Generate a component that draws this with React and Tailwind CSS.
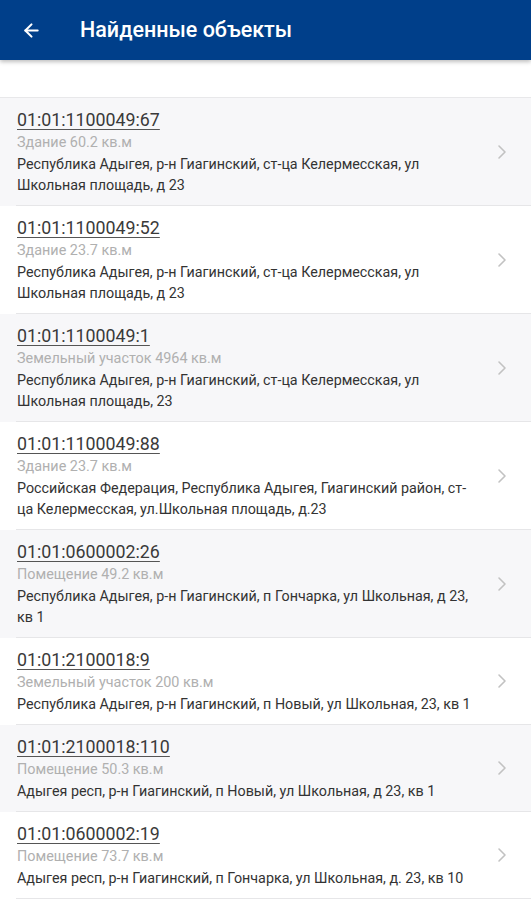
import { ArrowLeft } from 'lucide-react';

const items = [
  {
    id: '01:01:1100049:67',
    kind: 'Здание 60.2 кв.м',
    address: 'Республика Адыгея, р-н Гиагинский, ст-ца Келермесская, ул Школьная площадь, д 23',
  },
  {
    id: '01:01:1100049:52',
    kind: 'Здание 23.7 кв.м',
    address: 'Республика Адыгея, р-н Гиагинский, ст-ца Келермесская, ул Школьная площадь, д 23',
  },
  {
    id: '01:01:1100049:1',
    kind: 'Земельный участок 4964 кв.м',
    address: 'Республика Адыгея, р-н Гиагинский, ст-ца Келермесская, ул Школьная площадь, 23',
  },
  {
    id: '01:01:1100049:88',
    kind: 'Здание 23.7 кв.м',
    address: 'Российская Федерация, Республика Адыгея, Гиагинский район, ст-ца Келермесская, ул.Школьная площадь, д.23',
  },
  {
    id: '01:01:0600002:26',
    kind: 'Помещение 49.2 кв.м',
    address: 'Республика Адыгея, р-н Гиагинский, п Гончарка, ул Школьная, д 23, кв 1',
  },
  {
    id: '01:01:2100018:9',
    kind: 'Земельный участок 200 кв.м',
    address: 'Республика Адыгея, р-н Гиагинский, п Новый, ул Школьная, 23, кв 1',
  },
  {
    id: '01:01:2100018:110',
    kind: 'Помещение 50.3 кв.м',
    address: 'Адыгея респ, р-н Гиагинский, п Новый, ул Школьная, д 23, кв 1',
  },
  {
    id: '01:01:0600002:19',
    kind: 'Помещение 73.7 кв.м',
    address: 'Адыгея респ, р-н Гиагинский, п Гончарка, ул Школьная, д. 23, кв 10',
  },
];

const Chevron = () => (
  <svg width="10" height="16" viewBox="0 0 10 16" fill="none" className="shrink-0">
    <polyline points="2,2 8,8 2,14" stroke="#c2c2c2" strokeWidth="1.6" strokeLinecap="round" strokeLinejoin="round" />
  </svg>
);

const Row = ({ item, shaded }) => (
  <div className={shaded ? 'bg-[#f7f7f9]' : 'bg-white'}>
    <div className="flex items-center">
      <div className="flex-1 min-w-0 pl-[17px] pt-[10px] pb-[9px]">
        <p className="text-[17.8px] leading-[24px] text-[#3a3a3a] underline underline-offset-[3px] decoration-[1px] decoration-[#555]">
          {item.id}
        </p>
        <p className="text-[14.4px] leading-[22px] text-[#b0b0b0]">{item.kind}</p>
        <p className="text-[14.3px] leading-[21px] text-[#333] pr-[15px]">{item.address}</p>
      </div>
      <div className="w-[34px] flex items-center">
        <Chevron />
      </div>
    </div>
    <div className="ml-[16px] h-[1px] bg-[#e6e6e8]" />
  </div>
);

export default function App() {
  return (
    <div className="w-[531px] min-h-[900px] bg-white font-['Roboto','Noto_Sans',sans-serif]">
      <header className="h-[60px] bg-[#003f8a] flex items-center shadow-[0_2px_4px_rgba(0,0,0,0.25)] relative z-10">
        <div className="w-[80px] pl-[21px] flex items-center">
          <ArrowLeft className="w-[21px] h-[21px] text-white" strokeWidth={2.4} />
        </div>
        <h1 className="text-white text-[21.5px] font-medium">Найденные объекты</h1>
      </header>
      <div className="h-[37px] bg-white" />
      <div className="border-t border-[#e8e8ea]">
        {items.map((item, i) => (
          <Row key={item.id} item={item} shaded={i % 2 === 0} />
        ))}
      </div>
    </div>
  );
}
